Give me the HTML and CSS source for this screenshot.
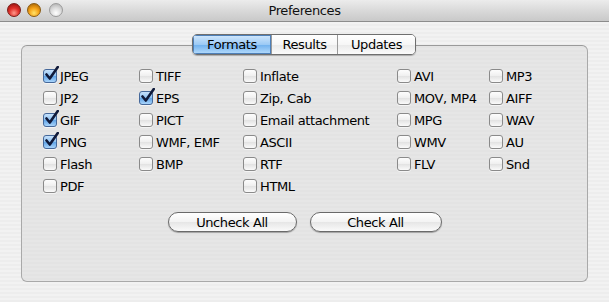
FILE: index.html
```html
<!DOCTYPE html>
<html lang="en">
<head>
    <meta charset="UTF-8">
    <title>Preferences</title>
    <link rel="stylesheet" href="styles.css">
</head>
<body>
    <div class="window">
        <div class="titlebar">
            <div class="lights">
                <span class="light close"></span>
                <span class="light minimize"></span>
                <span class="light zoom"></span>
            </div>
            <div class="title">Preferences</div>
            <div></div>
        </div>

        <div class="content">
            <div class="groupbox">
                <div class="tabs">
                    <span class="tab selected">Formats</span>
                    <span class="tab">Results</span>
                    <span class="tab">Updates</span>
                </div>

                <div class="formats">
                    <label class="item"><span class="box checked"></span>JPEG</label>
                    <label class="item"><span class="box"></span>TIFF</label>
                    <label class="item"><span class="box"></span>Inflate</label>
                    <label class="item"><span class="box"></span>AVI</label>
                    <label class="item"><span class="box"></span>MP3</label>

                    <label class="item"><span class="box"></span>JP2</label>
                    <label class="item"><span class="box checked"></span>EPS</label>
                    <label class="item"><span class="box"></span>Zip, Cab</label>
                    <label class="item"><span class="box"></span>MOV, MP4</label>
                    <label class="item"><span class="box"></span>AIFF</label>

                    <label class="item"><span class="box checked"></span>GIF</label>
                    <label class="item"><span class="box"></span>PICT</label>
                    <label class="item"><span class="box"></span>Email attachment</label>
                    <label class="item"><span class="box"></span>MPG</label>
                    <label class="item"><span class="box"></span>WAV</label>

                    <label class="item"><span class="box checked"></span>PNG</label>
                    <label class="item"><span class="box"></span>WMF, EMF</label>
                    <label class="item"><span class="box"></span>ASCII</label>
                    <label class="item"><span class="box"></span>WMV</label>
                    <label class="item"><span class="box"></span>AU</label>

                    <label class="item"><span class="box"></span>Flash</label>
                    <label class="item"><span class="box"></span>BMP</label>
                    <label class="item"><span class="box"></span>RTF</label>
                    <label class="item"><span class="box"></span>FLV</label>
                    <label class="item"><span class="box"></span>Snd</label>

                    <label class="item"><span class="box"></span>PDF</label>
                    <span></span>
                    <label class="item"><span class="box"></span>HTML</label>
                </div>

                <div class="actions">
                    <button class="button uncheck">Uncheck All</button>
                    <button class="button check">Check All</button>
                </div>
            </div>
        </div>
    </div>
</body>
</html>
```

FILE: styles.css
```css
body {
    margin: 0;
    font-family: "DejaVu Sans", Verdana, sans-serif;
    font-size: 13px;
    letter-spacing: -0.4px;
    color: #000;
}

.window {
    width: 609px;
    height: 302px;
    background: repeating-linear-gradient(#ededed 0, #ededed 2px, #f2f2f2 2px, #f2f2f2 4px);
    overflow: hidden;
}

.titlebar {
    height: 22px;
    display: grid;
    grid-template-columns: 1fr auto 1fr;
    align-items: center;
    background: linear-gradient(#ececec, #d6d6d6 60%, #c9c9c9);
    border-bottom: 1px solid #8c8c8c;
    box-sizing: border-box;
}

.lights {
    display: flex;
    gap: 6px;
    padding-left: 7px;
    padding-bottom: 1px;
}

.light {
    width: 14px;
    height: 14px;
    border-radius: 50%;
    box-sizing: border-box;
}

.close {
    background: radial-gradient(circle at 50% 75%, #ff9a8c 0, #e0302a 45%, #8c0d0a 100%);
    border: 1px solid #7a1b16;
}

.minimize {
    background: radial-gradient(circle at 50% 75%, #ffe36a 0, #f5a216 45%, #9a5a00 100%);
    border: 1px solid #8a5a10;
}

.zoom {
    margin-left: 2px;
    background: radial-gradient(circle at 50% 75%, #ffffff 0, #dadada 50%, #a8a8a8 100%);
    border: 1px solid #9b9b9b;
}

.title {
    color: #111;
    padding-bottom: 1px;
}

.content {
    padding: 23px 21px 0 21px;
}

.groupbox {
    height: 237px;
    box-sizing: border-box;
    background: repeating-linear-gradient(#e3e3e3 0, #e3e3e3 2px, #e6e6e6 2px, #e6e6e6 4px);
    border: 1px solid #a9a9a9;
    border-top-color: #9a9a9a;
    border-radius: 6px;
    display: flex;
    flex-direction: column;
    align-items: center;
}

.tabs {
    display: flex;
    margin-top: -12px;
    margin-left: -1px;
    height: 21px;
    border: 1px solid #6f6f6f;
    border-radius: 5px;
    box-sizing: border-box;
    overflow: hidden;
    box-shadow: 0 1px 1px rgba(0, 0, 0, 0.25);
}

.tab {
    display: flex;
    align-items: center;
    justify-content: center;
    height: 100%;
    background: linear-gradient(#ffffff, #f6f6f6 50%, #e9e9e9 51%, #fbfbfb);
    border-left: 1px solid #9a9a9a;
}

.tab:nth-child(1) { width: 78px; border-left: none; }
.tab:nth-child(2) { width: 65px; }
.tab:nth-child(3) { width: 77px; }

.tab.selected {
    background: linear-gradient(#d3e8fc, #9ccaf5 50%, #6fb0ee 51%, #b6dcfc);
    border-left: none;
    box-shadow: inset 0 0 0 1px #4d7fb8;
}

.formats {
    align-self: flex-start;
    display: grid;
    grid-template-columns: 96px 104px 154px 92px 80px;
    grid-auto-rows: 22px;
    margin-top: 10px;
    margin-left: 21px;
}

.item {
    display: flex;
    align-items: center;
    gap: 3px;
    white-space: nowrap;
}

.box {
    position: relative;
    width: 14px;
    height: 14px;
    box-sizing: border-box;
    flex: none;
    border: 1px solid #8a8a8a;
    border-radius: 3px;
    background: linear-gradient(#fdfdfd, #efefef 50%, #e2e2e2 51%, #fafafa);
    box-shadow: 0 1px 0 rgba(255, 255, 255, 0.6);
}

.box.checked {
    border-color: #45689a;
    background: linear-gradient(#c6e1fb, #8ec2f2 50%, #5fa3e6 51%, #a9d4fb);
}

.box.checked::after {
    content: "";
    position: absolute;
    left: 1px;
    top: -4px;
    width: 14px;
    height: 15px;
    background: no-repeat center / contain url("data:image/svg+xml,%3Csvg xmlns='http://www.w3.org/2000/svg' viewBox='0 0 14 15'%3E%3Cpath d='M1.5 8.5 L4.8 12.5 L12.8 1' fill='none' stroke='%23101a3a' stroke-width='2.6' stroke-linecap='round' stroke-linejoin='round'/%3E%3C/svg%3E");
}

.actions {
    display: flex;
    gap: 13px;
    margin-top: 15px;
}

.button {
    height: 20px;
    font-family: inherit;
    font-size: 13px;
    letter-spacing: -0.4px;
    color: #000;
    border: 1px solid #6a6a6a;
    border-radius: 10px;
    padding: 0;
    background: linear-gradient(#ffffff, #f3f3f3 50%, #e6e6e6 51%, #fafafa);
    box-shadow: 0 1px 1px rgba(0, 0, 0, 0.3);
}

.uncheck { width: 129px; }
.check { width: 132px; }
```
